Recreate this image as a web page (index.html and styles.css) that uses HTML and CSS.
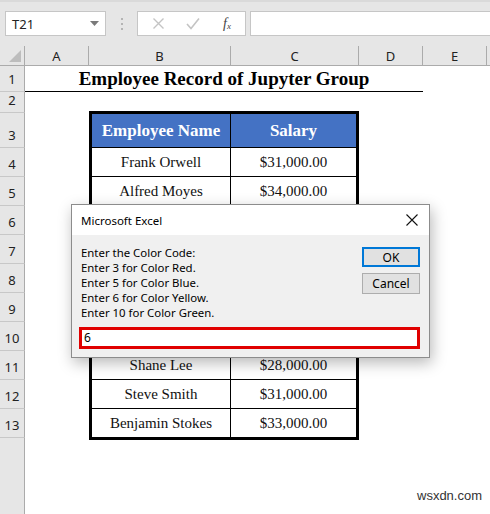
FILE: index.html
```html
<!DOCTYPE html>
<html lang="en">

<head>
  <meta charset="UTF-8" />
  <meta name="viewport" content="width=device-width, initial-scale=1.0" />
  <title>Employee Record - Excel</title>
  <link rel="stylesheet" href="styles.css">
</head>

<body>
  <!-- name box + formula bar -->
  <div class="toolbar">
    <div class="name-box">
      <span>T21</span>
      <svg class="caret" width="9" height="5" viewBox="0 0 9 5"><path d="M0 0h9L4.5 5z" fill="#7a7a7a"/></svg>
    </div>
    <div class="grip"><i></i><i></i><i></i></div>
    <div class="fx-box">
      <svg width="13" height="13" viewBox="0 0 13 13"><path d="M1.5 1.5l10 10M11.5 1.5l-10 10" stroke="#c4c4c4" stroke-width="1.4" fill="none"/></svg>
      <svg width="14" height="13" viewBox="0 0 14 13"><path d="M1 7l4 4.5L13 1.5" stroke="#c4c4c4" stroke-width="1.6" fill="none"/></svg>
      <span class="fx">f<sub>x</sub></span>
    </div>
    <div class="formula-input"></div>
  </div>

  <div class="sheet">
    <div class="corner"><span class="tri"></span></div>
    <div class="col-head">A</div>
    <div class="col-head">B</div>
    <div class="col-head">C</div>
    <div class="col-head">D</div>
    <div class="col-head">E</div>
    <div class="col-head last"></div>

    <div class="row-head" style="grid-row: 2">1</div>
    <div class="row-head" style="grid-row: 3">2</div>
    <div class="row-head" style="grid-row: 4">3</div>
    <div class="row-head" style="grid-row: 5">4</div>
    <div class="row-head" style="grid-row: 6">5</div>
    <div class="row-head" style="grid-row: 7">6</div>
    <div class="row-head" style="grid-row: 8">7</div>
    <div class="row-head" style="grid-row: 9">8</div>
    <div class="row-head" style="grid-row: 10">9</div>
    <div class="row-head" style="grid-row: 11">10</div>
    <div class="row-head" style="grid-row: 12">11</div>
    <div class="row-head" style="grid-row: 13">12</div>
    <div class="row-head" style="grid-row: 14">13</div>
    <div class="row-head empty" style="grid-row: 15"></div>

    <div class="title">Employee Record of Jupyter Group</div>

    <div class="records">
      <table>
        <tr><th>Employee Name</th><th>Salary</th></tr>
        <tr><td>Frank Orwell</td><td>$31,000.00</td></tr>
        <tr><td>Alfred Moyes</td><td>$34,000.00</td></tr>
        <tr><td></td><td></td></tr>
        <tr><td></td><td></td></tr>
        <tr><td></td><td></td></tr>
        <tr><td></td><td></td></tr>
        <tr><td></td><td></td></tr>
        <tr><td>Shane Lee</td><td>$28,000.00</td></tr>
        <tr><td>Steve Smith</td><td>$31,000.00</td></tr>
        <tr><td>Benjamin Stokes</td><td>$33,000.00</td></tr>
      </table>
    </div>
  </div>

  <!-- InputBox dialog -->
  <div class="dialog">
    <div class="dialog-title">
      <span>Microsoft Excel</span>
      <svg width="12" height="12" viewBox="0 0 12 12"><path d="M0.5 0.5l11 11M11.5 0.5l-11 11" stroke="#111" stroke-width="1.1" fill="none"/></svg>
    </div>
    <div class="dialog-body">
      <div class="prompt-row">
        <div class="prompt">
          Enter the Color Code:<br>
          Enter 3 for Color Red.<br>
          Enter 5 for Color Blue.<br>
          Enter 6 for Color Yellow.<br>
          Enter 10 for Color Green.
        </div>
        <div class="buttons">
          <button class="btn default">OK</button>
          <button class="btn">Cancel</button>
        </div>
      </div>
      <div class="answer">6</div>
    </div>
  </div>

  <div class="watermark">wsxdn.com</div>
</body>

</html>
```

FILE: styles.css
```css
body {
  margin: 0;
  padding: 0;
  width: 490px;
  height: 514px;
  overflow: hidden;
  background-color: #fff;
  font-family: "Noto Sans", "Liberation Sans", sans-serif;
  position: relative;
}

.toolbar {
  height: 46px;
  box-sizing: border-box;
  background-color: #e6e6e6;
  border-top: 2px solid #dadada;
  display: flex;
  align-items: flex-start;
  padding: 9px 0 0 5px;
}

.name-box {
  width: 101px;
  height: 25px;
  box-sizing: border-box;
  background-color: #fff;
  border: 1px solid #c6c6c6;
  display: flex;
  align-items: center;
  justify-content: space-between;
  padding: 0 6px 0 6px;
  font-size: 13px;
  color: #222;
}

.grip {
  width: 31px;
  height: 25px;
  display: flex;
  flex-direction: column;
  align-items: center;
  justify-content: center;
  gap: 3px;
}

.grip i {
  width: 2px;
  height: 2px;
  background-color: #b4b4b4;
}

.fx-box {
  width: 109px;
  height: 25px;
  box-sizing: border-box;
  background-color: #fff;
  border: 1px solid #c6c6c6;
  display: flex;
  align-items: center;
  gap: 21px;
  padding-left: 14px;
}

.fx {
  font-family: "Liberation Serif", serif;
  font-style: italic;
  font-size: 14px;
  color: #444;
  margin-left: 2px;
}

.fx sub {
  font-size: 9px;
  vertical-align: -1px;
}

.formula-input {
  flex: 1;
  height: 25px;
  margin-left: 4px;
  box-sizing: border-box;
  background-color: #fff;
  border: 1px solid #c6c6c6;
  border-right: none;
}

.sheet {
  display: grid;
  grid-template-columns: 25px 64px 142px 128px 64px 64px 1fr;
  grid-template-rows: 20px 26px 21px 35px repeat(10, 29px) 1fr;
  height: 468px;
}

.corner {
  grid-row: 1;
  grid-column: 1;
  background-color: #e6e6e6;
  border-right: 1px solid #ababab;
  border-bottom: 1px solid #ababab;
  position: relative;
}

.corner .tri {
  position: absolute;
  right: 3px;
  bottom: 3px;
  width: 0;
  height: 0;
  border-left: 12px solid transparent;
  border-bottom: 12px solid #bdbdbd;
}

.col-head {
  grid-row: 1;
  background-color: #e6e6e6;
  border-right: 1px solid #ababab;
  border-bottom: 1px solid #ababab;
  display: flex;
  align-items: center;
  justify-content: center;
  font-size: 13px;
  color: #222;
  padding-top: 1px;
}

.col-head.last {
  border-right: none;
}

.row-head {
  grid-column: 1;
  background-color: #e6e6e6;
  border-right: 1px solid #ababab;
  border-bottom: 1px solid #c8c8c8;
  display: flex;
  align-items: flex-end;
  justify-content: center;
  padding-bottom: 3px;
  box-sizing: border-box;
  font-size: 13px;
  color: #222;
}

.row-head.empty {
  border-bottom: none;
}

.title {
  grid-column: 2 / 6;
  grid-row: 2;
  border-bottom: 1px solid #000;
  display: flex;
  align-items: center;
  justify-content: center;
  font-family: "Liberation Serif", serif;
  font-weight: bold;
  font-size: 19px;
  color: #000;
}

.records {
  grid-column: 3 / 5;
  grid-row: 4 / 15;
  margin-top: -2px;
}

.records table {
  border-collapse: collapse;
  width: 100%;
  height: 100%;
  border: 3px solid #000;
  font-family: "Liberation Serif", serif;
}

.records th {
  height: 33px;
  background-color: #4472c4;
  color: #fff;
  font-size: 17px;
  border: 1px solid #000;
  padding: 0;
}

.records td {
  height: 28px;
  font-size: 15px;
  text-align: center;
  border: 1px solid #000;
  padding: 0;
  color: #111;
}

.records th:first-child,
.records td:first-child {
  width: 138px;
}

/* message box laid over the sheet */
.dialog {
  position: absolute;
  left: 71px;
  top: 204px;
  width: 359px;
  height: 154px;
  box-sizing: border-box;
  border: 1px solid #8c8c8c;
  background-color: #f0f0f0;
  box-shadow: 2px 5px 14px rgba(0, 0, 0, 0.28);
  display: flex;
  flex-direction: column;
}

.dialog-title {
  height: 30px;
  background-color: #fff;
  display: flex;
  align-items: center;
  justify-content: space-between;
  padding: 0 11px 0 9px;
  font-size: 11.5px;
  color: #000;
}

.dialog-body {
  flex: 1;
  display: flex;
  flex-direction: column;
  padding: 10px 9px 0 7px;
}

.prompt-row {
  display: flex;
  justify-content: space-between;
  height: 80px;
}

.prompt {
  font-size: 11.4px;
  line-height: 15px;
  color: #000;
  padding-left: 2px;
}

.buttons {
  display: flex;
  flex-direction: column;
  gap: 6px;
  padding-top: 2px;
}

.btn {
  width: 58px;
  height: 21px;
  box-sizing: border-box;
  background-color: #e1e1e1;
  border: 1px solid #adadad;
  font-family: "Noto Sans", "Liberation Sans", sans-serif;
  font-size: 12px;
  color: #000;
  padding: 0;
}

.btn.default {
  height: 20px;
  border: 2px solid #0078d7;
}

.answer {
  margin-top: 2px;
  height: 22px;
  box-sizing: border-box;
  border: 3px solid #e00000;
  background-color: #fff;
  font-size: 12px;
  line-height: 16px;
  padding-left: 2px;
  color: #000;
}

.watermark {
  position: absolute;
  left: 417px;
  top: 488px;
  font-family: "Liberation Sans", sans-serif;
  font-size: 13px;
  color: #333;
}
```
